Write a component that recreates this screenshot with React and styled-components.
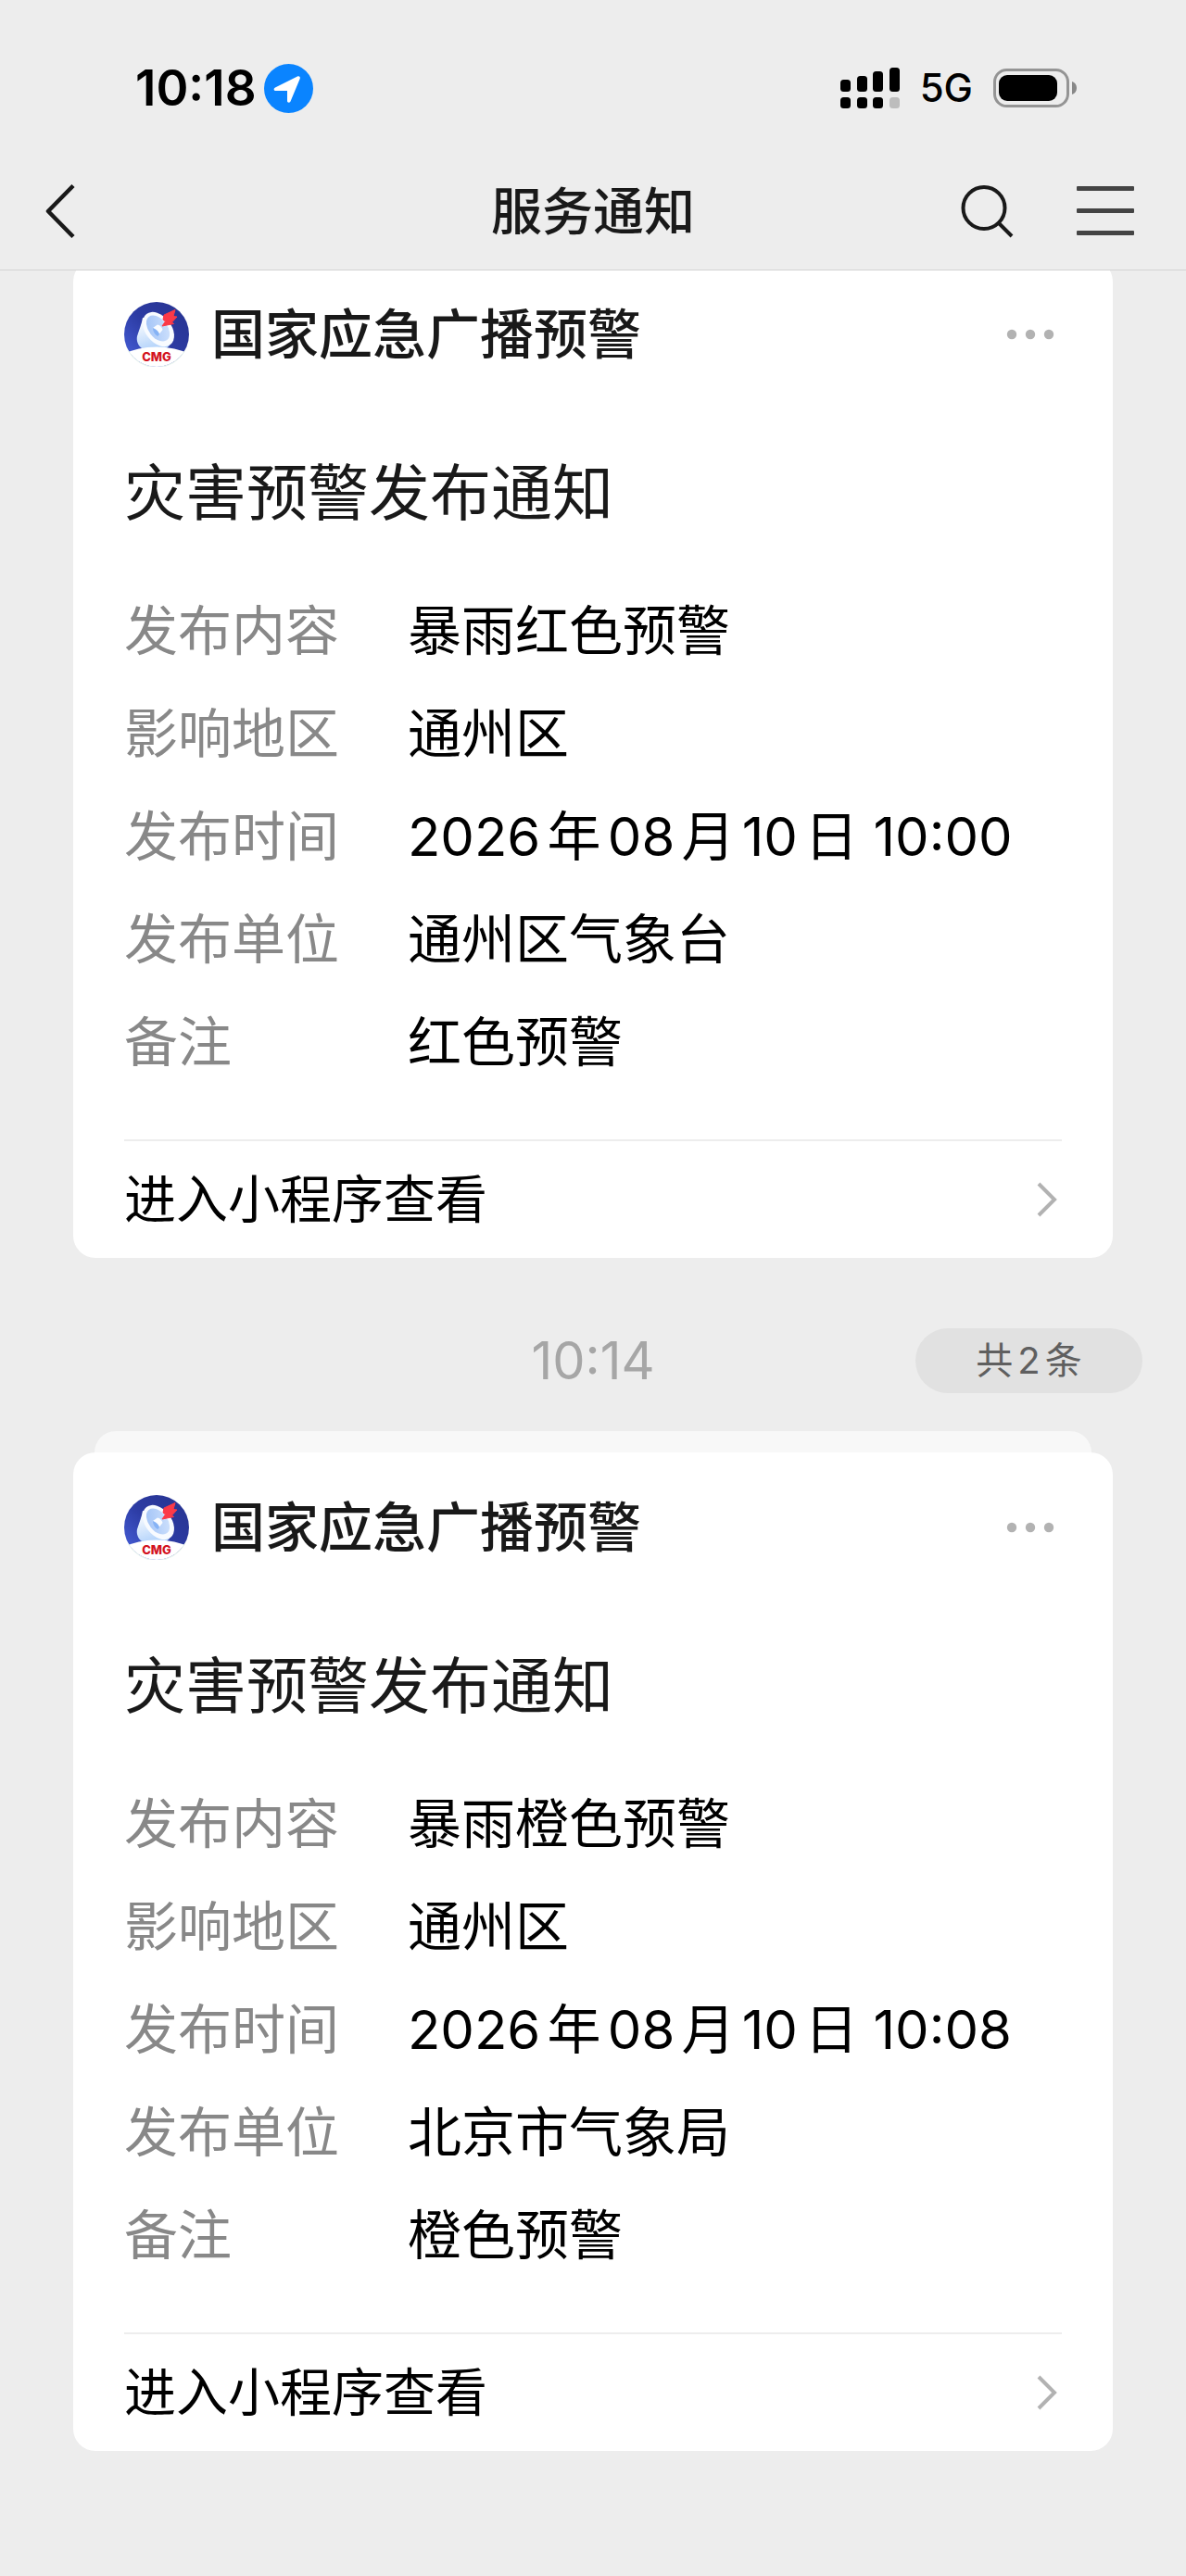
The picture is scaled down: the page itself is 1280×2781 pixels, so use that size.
import React from 'react';
import styled, { createGlobalStyle } from 'styled-components';

const GlobalStyle = createGlobalStyle`
* {
    box-sizing: border-box;
}
body {
    margin: 0;
    background: #ededed;
    color: #000;
    font-family: Inter, "Noto Sans CJK SC", sans-serif;
    text-autospace: normal;
}
h1, h2, h3, p, dl, dd {
    margin: 0;
}
button {
    padding: 0;
    border: 0;
    background: none;
    color: inherit;
    font: inherit;
    cursor: pointer;
}
svg {
    display: block;
}
`;

const Screen = styled.div`
min-height: 100vh;
padding-bottom: 120px;
`;

const Header = styled.header`
position: sticky;
top: 0;
z-index: 2;
background: #ededed;
border-bottom: 1px solid #d3d3d3;
`;

const StatusBar = styled.div`
display: flex;
align-items: center;
justify-content: space-between;
height: 165px;
padding: 25px 117px 0 146px;
`;

const StatusGroup = styled.div`
display: flex;
align-items: center;
gap: ${({gap}) => gap}px;
`;

const Clock = styled.time`
font-size: 53px;
line-height: 60px;
font-weight: 600;
`;

const Network = styled.span`
font-size: 42px;
line-height: 60px;
font-weight: 500;
`;

const NavBar = styled.nav`
display: grid;
grid-template-columns: 1fr auto 1fr;
align-items: center;
height: 126px;
padding: 0 56px 0 48px;
color: #191919;
`;

const NavTitle = styled.h1`
margin-left: 8px;
font-size: 55px;
line-height: 80px;
font-weight: 500;
`;

const NavButton = styled.button`
justify-self: start;
`;

const NavActions = styled.div`
display: flex;
align-items: center;
justify-self: end;
gap: 68px;
`;

// the first card is scrolled a little way under the header
const Feed = styled.main`
margin-top: -12px;
padding: 0 79px;
`;

const Card = styled.article`
position: relative;
padding: 45px 55px 0;
border-radius: 24px;
background: #fff;
`;

const StackEdge = styled.div`
height: 23px;
margin: 0 23px;
border-radius: 24px 24px 0 0;
background: #f8f8f8;
`;

const CardHead = styled.div`
display: flex;
align-items: center;
height: 72px;
`;

const Sender = styled.h2`
flex: 1;
margin-left: 24px;
color: #191919;
font-size: 58px;
line-height: 72px;
font-weight: 500;
`;

const MoreButton = styled.button`
margin-right: 8px;
`;

const CardTitle = styled.h3`
margin-top: 95px;
color: #191919;
font-size: 66px;
line-height: 80px;
font-weight: 400;
`;

const Fields = styled.dl`
display: grid;
grid-template-columns: 306px 1fr;
row-gap: 31px;
margin-top: 69px;
padding-bottom: 65px;
border-bottom: 2px solid #ededed;
font-size: 58px;
line-height: 80px;
`;

const Label = styled.dt`
color: #888;
`;

const EnterLink = styled.a`
display: flex;
align-items: center;
justify-content: space-between;
height: 126px;
padding-right: 5px;
color: #000;
font-size: 56px;
line-height: 80px;
text-decoration: none;
`;

const TimeRow = styled.div`
display: grid;
grid-template-columns: 1fr auto 1fr;
align-items: center;
margin: 76px -32px 41px;
`;

const TimeLabel = styled.time`
grid-column: 2;
color: #a6a6a6;
font-size: 56px;
line-height: 70px;
`;

const CountButton = styled.button`
justify-self: end;
width: 245px;
height: 70px;
border-radius: 35px;
background: #e1e1e1;
color: #5f5f5f;
font-size: 40px;
line-height: 70px;
`;

const LogoText = styled.text`
fill: #d3121d;
font-family: Inter, sans-serif;
font-size: 13px;
font-weight: 800;
`;

const messages = [
    {
        id: 'red',
        fields: [
            ['发布内容', '暴雨红色预警'],
            ['影响地区', '通州区'],
            ['发布时间', '2026年08月10日 10:00'],
            ['发布单位', '通州区气象台'],
            ['备注', '红色预警']
        ]
    },
    {
        id: 'orange',
        fields: [
            ['发布内容', '暴雨橙色预警'],
            ['影响地区', '通州区'],
            ['发布时间', '2026年08月10日 10:08'],
            ['发布单位', '北京市气象局'],
            ['备注', '橙色预警']
        ]
    }
];

const LocationIcon = () => (
    <svg width="53" height="53" viewBox="0 0 53 53" aria-hidden="true">
        <circle cx="26.5" cy="26.5" r="26.5" fill="#0a84ff"/>
        <path d="M12 25.5 36 13.500c1.800-.9 3.500.6 2.700 2.500L28.500 40.500c-.8 1.800-3.500 1.500-3.500-.5V29H12.500c-2.200 0-2.500-2.600-.5-3.500Z" fill="#fff"/>
    </svg>
);

const SignalIcon = () => (
    <svg width="64" height="44" viewBox="0 0 64 44" aria-hidden="true">
        <rect x="0" y="13" width="11" height="13" rx="3.5"/>
        <rect x="18" y="9" width="11" height="17" rx="3.5"/>
        <rect x="35" y="4" width="11" height="22" rx="3.5"/>
        <rect x="53" y="0" width="11" height="26" rx="3.5"/>
        <rect x="0" y="32" width="11" height="12" rx="3.5"/>
        <rect x="18" y="32" width="11" height="12" rx="3.5"/>
        <rect x="35" y="32" width="11" height="12" rx="3.5"/>
        <rect x="53" y="32" width="11" height="12" rx="3.5" fill="#bdbdbd"/>
    </svg>
);

const BatteryIcon = () => (
    <svg width="91" height="42" viewBox="0 0 91 42" aria-hidden="true">
        <rect x="1.5" y="1.5" width="79" height="39" rx="13" fill="none" stroke="#949494" strokeWidth="3"/>
        <rect x="6" y="7" width="63" height="28" rx="9"/>
        <path d="M85 14c3 1 5 3.500 5 7s-2 6-5 7Z" fill="#888"/>
    </svg>
);

const BackIcon = () => (
    <svg width="34" height="60" viewBox="0 0 34 60" fill="none" stroke="currentColor" strokeWidth="4.5" strokeLinejoin="round" aria-hidden="true">
        <path d="M31 2.500 4 30l27 27.500"/>
    </svg>
);

const SearchIcon = () => (
    <svg width="57" height="58" viewBox="0 0 57 58" fill="none" stroke="currentColor" strokeWidth="4" aria-hidden="true">
        <circle cx="25" cy="25.5" r="22.5"/>
        <path d="m40 41 15 15"/>
    </svg>
);

const MenuIcon = () => (
    <svg width="62" height="54" viewBox="0 0 62 54" fill="#444" aria-hidden="true">
        <rect y="0" width="62" height="5" rx="1"/>
        <rect y="24" width="62" height="5" rx="1"/>
        <rect y="48" width="62" height="5" rx="1"/>
    </svg>
);

const MoreIcon = () => (
    <svg width="52" height="12" viewBox="0 0 52 12" fill="#b2b2b2" aria-hidden="true">
        <circle cx="6" cy="6" r="5.2"/>
        <circle cx="26" cy="6" r="5.2"/>
        <circle cx="46" cy="6" r="5.2"/>
    </svg>
);

const ChevronIcon = () => (
    <svg width="22" height="38" viewBox="0 0 22 38" fill="none" stroke="#b2b2b2" strokeWidth="4" aria-hidden="true">
        <path d="m2 2 17 17L2 36"/>
    </svg>
);

const Logo = ({id}) => (
    <svg width="70" height="70" viewBox="0 0 70 70" aria-hidden="true">
        <defs>
            <clipPath id={`clip-${id}`}><circle cx="35" cy="35" r="35"/></clipPath>
            <linearGradient id={`sky-${id}`} x1="0" y1="1" x2="1" y2="0">
                <stop offset="0" stopColor="#4a64e0"/>
                <stop offset=".5" stopColor="#2c3ba3"/>
                <stop offset="1" stopColor="#27338f"/>
            </linearGradient>
            <linearGradient id={`horn-${id}`} x1=".3" y1="0" x2=".6" y2="1">
                <stop offset="0" stopColor="#fff"/>
                <stop offset="1" stopColor="#a9cdfa"/>
            </linearGradient>
            <linearGradient id={`dish-${id}`} x1="0" y1="0" x2="1" y2="1">
                <stop offset="0" stopColor="#9dc0f6"/>
                <stop offset="1" stopColor="#d3e4fd"/>
            </linearGradient>
        </defs>
        <g clipPath={`url(#clip-${id})`}>
            <rect width="70" height="70" fill={`url(#sky-${id})`}/>
            <path d="M20 17c-1 7-4 13-6 20-1 5 1 10 5 13l22 4 8-7-10-26Z" fill={`url(#horn-${id})`}/>
            <ellipse cx="37" cy="29.5" rx="14" ry="21" fill="#f8fbff" transform="rotate(-38 37 29.5)"/>
            <ellipse cx="36.5" cy="28.5" rx="10" ry="16" fill={`url(#dish-${id})`} transform="rotate(-38 36.5 28.5)"/>
            <path d="m31 28 5-3.500c2 0 5 3 5.500 5.500l-3.500 4.500Z" fill="#fafcff"/>
            <path d="M31 28c3 1 6 3.500 7 6.500l-1.500 2.500c-3-1-5.500-5-5.500-9Z" fill="#86b3f5"/>
            <path d="m43 14 12-5.500-2 7 4 .5-5.500 6 2 1.500-12.500 2.500 3.500-5-2.500-2Z" fill="#fb3a48" stroke="#fb3a48" strokeLinejoin="round"/>
            <ellipse cx="35" cy="75" rx="50" ry="26.5" fill="#fff"/>
        </g>
        <path d="M4 52a35 35 0 0 0 62 0" fill="none" stroke="#e6f3ec" strokeWidth="1"/>
        <LogoText x="35" y="64" textAnchor="middle">CMG</LogoText>
    </svg>
);

const NoticeCard = ({message}) => {
    const {id, fields} = message;

    return (
        <Card>
            <CardHead>
                <Logo id={id}/>
                <Sender>国家应急广播预警</Sender>
                <MoreButton type="button" aria-label="更多"><MoreIcon/></MoreButton>
            </CardHead>
            <CardTitle>灾害预警发布通知</CardTitle>
            <Fields>
                {fields.map(([label, value]) => (
                    <React.Fragment key={label}>
                        <Label>{label}</Label>
                        <dd>{value}</dd>
                    </React.Fragment>
                ))}
            </Fields>
            <EnterLink href="#">
                进入小程序查看
                <ChevronIcon/>
            </EnterLink>
        </Card>
    )
};

export default function App() {
    const [first, second] = messages;

    return (
        <Screen lang="zh-CN">
            <GlobalStyle/>
            <Header>
                <StatusBar>
                    <StatusGroup gap={8}>
                        <Clock>10:18</Clock>
                        <LocationIcon/>
                    </StatusGroup>
                    <StatusGroup gap={22}>
                        <SignalIcon/>
                        <Network>5G</Network>
                        <BatteryIcon/>
                    </StatusGroup>
                </StatusBar>
                <NavBar>
                    <NavButton type="button" aria-label="返回"><BackIcon/></NavButton>
                    <NavTitle>服务通知</NavTitle>
                    <NavActions>
                        <NavButton type="button" aria-label="搜索"><SearchIcon/></NavButton>
                        <NavButton type="button" aria-label="菜单"><MenuIcon/></NavButton>
                    </NavActions>
                </NavBar>
            </Header>
            <Feed>
                <NoticeCard message={first}/>
                <TimeRow>
                    <TimeLabel>10:14</TimeLabel>
                    <CountButton type="button">共2条</CountButton>
                </TimeRow>
                <StackEdge/>
                <NoticeCard message={second}/>
            </Feed>
        </Screen>
    );
}
